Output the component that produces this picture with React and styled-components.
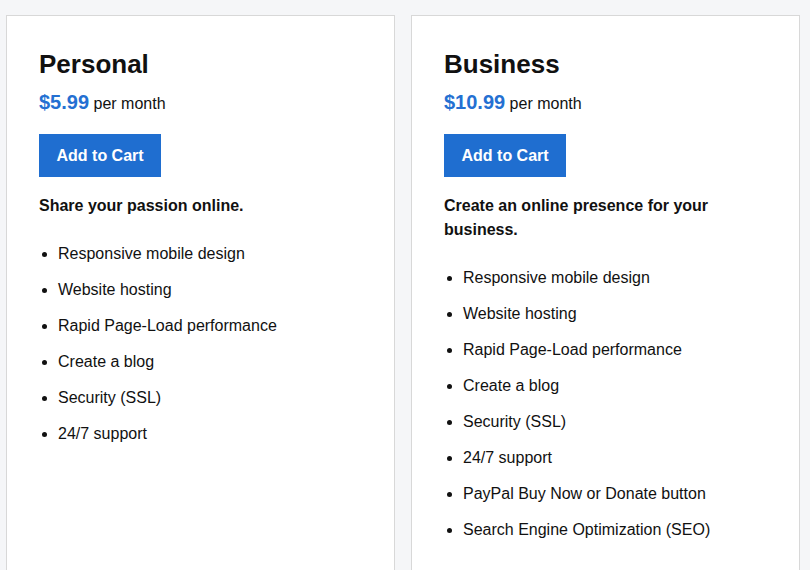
import React from "react";
import styled, { createGlobalStyle } from "styled-components";

const Global = createGlobalStyle`
  html, body { margin: 0; padding: 0; overflow: hidden; background: #f5f6f8; }
  body { font-family: "Liberation Sans", Arial, sans-serif; color: #111; }
`;

const Page = styled.div`
  display: grid;
  grid-template-columns: 389px 389px;
  column-gap: 16px;
  padding: 15px 10px 0 6px;
  height: 570px;
  box-sizing: border-box;
`;

const Card = styled.div`
  background: #fff;
  border: 1px solid #d8d8d8;
  padding: 33px 32px 0 32px;
  height: 620px;
  box-sizing: border-box;
`;

const Title = styled.h2`
  margin: 0;
  font-size: 26px;
  line-height: 31px;
  font-weight: 700;
  color: #111;
`;

const PriceRow = styled.div`
  margin-top: 10px;
  line-height: 24px;
  font-size: 16px;
`;

const Price = styled.span`
  color: #2470d2;
  font-weight: 700;
  font-size: 20px;
`;

const Button = styled.button`
  display: block;
  margin-top: 18px;
  height: 43px;
  padding: 0 17.5px;
  border: none;
  background: #1f6ed0;
  color: #fff;
  font-family: inherit;
  font-size: 16px;
  font-weight: 700;
  cursor: pointer;
`;

const Desc = styled.p`
  margin: 17px 0 0;
  font-size: 16px;
  line-height: 24px;
  font-weight: 700;
`;

const List = styled.ul`
  margin: 24px 0 0;
  padding-left: 19px;
  list-style: disc;
`;

const Item = styled.li`
  font-size: 16px;
  line-height: 24px;
  margin-bottom: 12px;
`;

const plans = [
  {
    name: "Personal",
    price: "$5.99",
    desc: "Share your passion online.",
    features: [
      "Responsive mobile design",
      "Website hosting",
      "Rapid Page-Load performance",
      "Create a blog",
      "Security (SSL)",
      "24/7 support",
    ],
  },
  {
    name: "Business",
    price: "$10.99",
    desc: "Create an online presence for your business.",
    features: [
      "Responsive mobile design",
      "Website hosting",
      "Rapid Page-Load performance",
      "Create a blog",
      "Security (SSL)",
      "24/7 support",
      "PayPal Buy Now or Donate button",
      "Search Engine Optimization (SEO)",
    ],
  },
];

export default function App() {
  return (
    <>
      <Global />
      <Page>
        {plans.map((p) => (
          <Card key={p.name}>
            <Title>{p.name}</Title>
            <PriceRow>
              <Price>{p.price}</Price> per month
            </PriceRow>
            <Button>Add to Cart</Button>
            <Desc>{p.desc}</Desc>
            <List>
              {p.features.map((f) => (
                <Item key={f}>{f}</Item>
              ))}
            </List>
          </Card>
        ))}
      </Page>
    </>
  );
}
